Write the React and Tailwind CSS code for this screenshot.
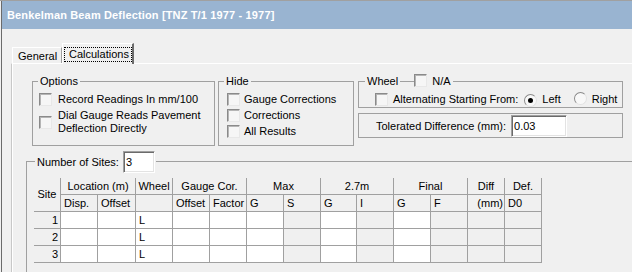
import React from 'react'

// Classic-looking sunken checkbox
function Check() {
    return (
        <span className="inline-block w-[13px] h-[13px] shrink-0 border border-t-[#8a8a8a] border-l-[#8a8a8a] border-r-[#e8e8e8] border-b-[#e8e8e8] bg-[#f6f6f6] shadow-[inset_1px_1px_0_#b5b5b5]" />
    )
}

function Radio({ checked }) {
    return (
        <span className="inline-flex w-[13px] h-[13px] shrink-0 items-center justify-center rounded-full border border-t-[#8a8a8a] border-l-[#8a8a8a] border-r-[#e2e2e2] border-b-[#e2e2e2] bg-[#f8f8f8]">
            {checked && <span className="w-[5px] h-[5px] rounded-full bg-black" />}
        </span>
    )
}

const HEAD1 = [
    { label: 'Location (m)', w: 'w-[75px]' },
    { label: 'Wheel', w: 'w-[37px]' },
    { label: 'Gauge Cor.', w: 'w-[74px]' },
    { label: 'Max', w: 'w-[74px]' },
    { label: '2.7m', w: 'w-[73px]' },
    { label: 'Final', w: 'w-[74px]' },
    { label: 'Diff', w: 'w-[37px]' },
    { label: 'Def.', w: 'w-[37px]' },
]

const HEAD2 = [
    { label: 'Disp.', w: 'w-[37px]', white: true },
    { label: 'Offset', w: 'w-[38px]', white: true },
    { label: '', w: 'w-[37px]', white: true, wheel: true },
    { label: 'Offset', w: 'w-[37px]', white: true },
    { label: 'Factor', w: 'w-[37px]', white: true },
    { label: 'G', w: 'w-[37px]', white: true },
    { label: 'S', w: 'w-[37px]' },
    { label: 'G', w: 'w-[36px]', white: true },
    { label: 'I', w: 'w-[37px]' },
    { label: 'G', w: 'w-[37px]', white: true },
    { label: 'F', w: 'w-[37px]' },
    { label: '(mm)', w: 'w-[37px]', right: true },
    { label: 'D0', w: 'w-[37px]' },
]

function SitesTable() {
    return (
        <div className="ml-[7px] mt-[5px] w-fit">
            {/* Header */}
            <div className="flex">
                <div className="w-[27px] h-[34px] border-r border-b border-[#a0a0a0] flex items-center justify-center">Site</div>
                <div className="flex flex-col">
                    <div className="flex h-[17px]">
                        {HEAD1.map((h) => (
                            <div key={h.label} className={`${h.w} h-[17px] border-r border-b border-[#a0a0a0] flex items-center justify-center`}>
                                {h.label}
                            </div>
                        ))}
                    </div>
                    <div className="flex h-[17px]">
                        {HEAD2.map((h, i) => (
                            <div
                                key={i}
                                className={`${h.w} h-[17px] border-r border-b border-[#a0a0a0] flex items-center ${h.right ? 'justify-end pr-[1px]' : 'pl-[3px]'}`}
                            >
                                {h.label}
                            </div>
                        ))}
                    </div>
                </div>
            </div>
            {/* Rows */}
            {[1, 2, 3].map((n) => (
                <div key={n} className="flex h-[17px]">
                    <div className="w-[27px] h-[17px] border-r border-b border-[#a0a0a0] flex items-center justify-end pr-[2px]">{n}</div>
                    {HEAD2.map((h, i) => (
                        <div
                            key={i}
                            className={`${h.w} h-[17px] border-r border-b border-[#a0a0a0] flex items-center pl-[3px] ${h.white ? 'bg-white' : ''}`}
                        >
                            {h.wheel ? 'L' : ''}
                        </div>
                    ))}
                </div>
            ))}
        </div>
    )
}

export default function App() {
    return (
        <div className="w-[632px] h-[272px] overflow-hidden bg-[#f0f0f0] border-t border-[#a0a0a0] pl-px font-['Liberation_Sans',Arial,sans-serif] text-[11px] leading-[13px] text-black">
            <div className="h-full border-l border-[#6b6b6b] flex flex-col">
                {/* Title bar */}
                <div className="h-[28px] shrink-0 bg-[#99b4d1] pl-[5px] flex items-center text-white font-bold text-[11px] tracking-[0.15px]">
                    Benkelman Beam Deflection [TNZ T/1 1977 - 1977]
                </div>

                {/* Tabs */}
                <div className="ml-[10px] mt-[14px] flex items-end -mb-px relative z-10">
                    <div className="w-[50px] h-[16px] mb-px border-t border-l border-white border-r border-r-[#a0a0a0] flex items-center pl-[5px] pt-px">
                        General
                    </div>
                    <div className="w-[72px] h-[21px] bg-[#f0f0f0] border-t border-l border-white border-r-2 border-r-[#6b6b6b] flex items-start pt-[3px] pl-px">
                        <div className="w-[68px] h-[15px] border border-dotted border-black flex items-center pl-[4px]">Calculations</div>
                    </div>
                </div>

                {/* Panel */}
                <div className="ml-[9px] flex-1 border-t border-l border-t-white border-l-[#c8c8c8] shadow-[inset_1px_0_0_#ffffff]">
                    <div className="pt-[17px] ml-[20px] flex items-start">
                        {/* Options */}
                        <div className="w-[183px] h-[65px] border border-[#a0a0a0] shrink-0">
                            <div className="-mt-[7px] ml-[5px] px-[2px] w-fit bg-[#f0f0f0]">Options</div>
                            <div className="mt-[5px] ml-[6px] flex items-center gap-[6px] h-[13px]">
                                <Check />
                                <span>Record Readings In mm/100</span>
                            </div>
                            <div className="mt-[3px] ml-[6px] flex items-center gap-[6px]">
                                <Check />
                                <span>
                                    Dial Gauge Reads Pavement
                                    <br />
                                    Deflection Directly
                                </span>
                            </div>
                        </div>

                        {/* Hide */}
                        <div className="ml-[3px] w-[136px] h-[65px] border border-[#a0a0a0] shrink-0">
                            <div className="-mt-[7px] ml-[5px] px-[2px] w-fit bg-[#f0f0f0]">Hide</div>
                            <div className="mt-[5px] ml-[8px] flex flex-col gap-[3px]">
                                {['Gauge Corrections', 'Corrections', 'All Results'].map((t) => (
                                    <div key={t} className="flex items-center gap-[4px] h-[13px]">
                                        <Check />
                                        <span>{t}</span>
                                    </div>
                                ))}
                            </div>
                        </div>

                        {/* Wheel + tolerance */}
                        <div className="ml-[4px] w-[265px] shrink-0 flex flex-col">
                            <div className="h-[27px] border border-[#a0a0a0]">
                                <div className="-mt-[7px] ml-[6px] h-[13px] flex items-center">
                                    <span className="bg-[#f0f0f0] px-[2px]">Wheel</span>
                                    <span className="ml-[14px]"><Check /></span>
                                    <span className="bg-[#f0f0f0] pl-[5px] pr-[2px]">N/A</span>
                                </div>
                                <div className="mt-[5px] ml-[16px] h-[13px] flex items-center">
                                    <Check />
                                    <span className="ml-[5px]">Alternating Starting From:</span>
                                    <span className="ml-[6px]"><Radio checked /></span>
                                    <span className="ml-[5px]">Left</span>
                                    <span className="ml-[13px]"><Radio /></span>
                                    <span className="ml-[5px]">Right</span>
                                </div>
                            </div>
                            <div className="mt-[5px] h-[25px] border border-[#a0a0a0] flex items-start pt-px pl-[17px]">
                                <span className="self-center">Tolerated Difference (mm):</span>
                                <input
                                    readOnly
                                    defaultValue="0.03"
                                    className="ml-[5px] w-[56px] h-[22px] bg-white pl-[2px] outline-none border border-t-[#a0a0a0] border-l-[#a0a0a0] border-r-white border-b-white shadow-[inset_1px_1px_0_#6b6b6b,inset_-1px_-1px_0_#e3e3e3]"
                                />
                            </div>
                        </div>
                    </div>

                    {/* Number of sites */}
                    <div className="mt-[15px] ml-[14px] w-[620px] h-[130px] border border-[#a0a0a0]">
                        <div className="-mt-[11px] ml-[8px] w-fit h-[22px] bg-[#f0f0f0] pl-[2px] pr-px flex items-center">
                            <span>Number of Sites:</span>
                            <input
                                readOnly
                                defaultValue="3"
                                className="ml-[4px] w-[32px] h-[22px] bg-white pl-[2px] outline-none border border-t-[#a0a0a0] border-l-[#a0a0a0] border-r-white border-b-white shadow-[inset_1px_1px_0_#6b6b6b,inset_-1px_-1px_0_#e3e3e3]"
                            />
                        </div>
                        <SitesTable />
                    </div>
                </div>
            </div>
        </div>
    )
}
